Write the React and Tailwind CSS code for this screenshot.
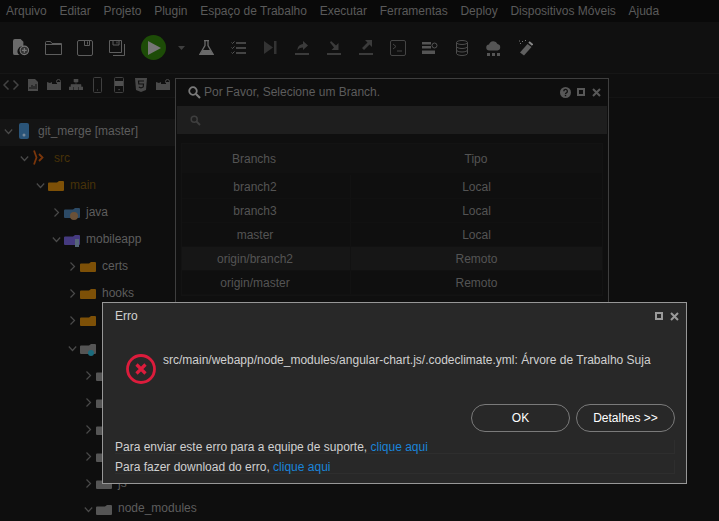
import React from "react";

const menus = ["Arquivo","Editar","Projeto","Plugin","Espaço de Trabalho","Executar","Ferramentas","Deploy","Dispositivos Móveis","Ajuda"];

const S = ({ w = 18, h = 18, vb = "0 0 18 18", children, className = "" }) => (
  <svg width={w} height={h} viewBox={vb} className={"shrink-0 " + className}>{children}</svg>
);

const C = "#5e5e5e";

const FolderIcon = ({ color = "#7d5007", children }) => (
  <svg width="16" height="11" viewBox="0 0 16 11" className="shrink-0 overflow-visible translate-y-[1px]">
    <path d="M0 3.500a1 1 0 0 1 1-1h8l2-1.500h4a1 1 0 0 1 1 1v8a1 1 0 0 1-1 1H1a1 1 0 0 1-1-1z" fill={color} />
    {children}
  </svg>
);

const Chev = ({ open }) => (
  <svg width="9" height="9" viewBox="0 0 9 9" className="shrink-0 translate-y-[1px]">
    {open ? <path d="M.8 2.500l3.700 4 3.700-4" fill="none" stroke="#4a4a4a" strokeWidth="1.200"/> : <path d="M2.500 .5l4 4-4 4" fill="none" stroke="#4a4a4a" strokeWidth="1.200"/>}
  </svg>
);

const Row = ({ ind, open, icon, label, color = "text-[#5d5d5d]", h = "h-[27px]", sel, gap = "gap-[3px]" }) => (
  <div className={`flex items-center pb-[4px] ${h} ${sel ? "bg-[#141414]" : ""}`}>
    <div className={`flex items-center ${gap} ${ind}`}>
      <Chev open={open} />
      {icon}
      <span className={`text-[12px] leading-none ml-[3px] whitespace-nowrap ${color}`}>{label}</span>
    </div>
  </div>
);

const Tool2 = ({ children }) => <div className="w-[21.7px] flex justify-center -mt-[2px]">{children}</div>;

const Ctl = ({ help, c = "#585858" }) => (
  <div className="flex items-center gap-[6px]">
    {help && (
      <svg width="11" height="11" viewBox="0 0 11 11"><circle cx="5.500" cy="5.500" r="5.500" fill={c}/><path d="M3.800 4.300a1.800 1.800 0 1 1 2.600 1.500c-.6.3-.9.6-.9 1.100" fill="none" stroke="#111" strokeWidth="1.300"/><rect x="4.800" y="7.800" width="1.400" height="1.400" fill="#111"/></svg>
    )}
    <svg width="8" height="8" viewBox="0 0 8 8"><rect x="1" y="1" width="6" height="6" fill="none" stroke={c} strokeWidth="2"/></svg>
    <svg width="9" height="9" viewBox="0 0 9 9" className="ml-[1px]"><path d="M1 1l7 7M8 1L1 8" stroke={c} strokeWidth="2"/></svg>
  </div>
);

const FolderBadge = () => (
  <svg width="14" height="11" viewBox="0 0 14 11"><path d="M0 3l3 1 2-1v2h5V3h4v8H0z" fill="#4a4a4a"/><circle cx="11.500" cy="2.500" r="2" fill="none" stroke="#4a4a4a"/></svg>
);

const tableRows = [["branch2","Local"],["branch3","Local"],["master","Local"],["origin/branch2","Remoto",true],["origin/master","Remoto"]];

export default function App() {
  return (
    <div className="relative w-[719px] h-[521px] overflow-hidden bg-[#0e0e0e] [font-family:'Liberation_Sans',Arial,sans-serif]">
      {/* menu */}
      <div className="h-[22px] bg-[#090909] flex items-center pl-[6px] gap-[12.7px] text-[12px] text-[#5a5a5a]">
        {menus.map((m) => <span key={m} className="whitespace-nowrap">{m}</span>)}
      </div>
      {/* toolbar */}
      <div className="h-[52px] bg-[#101010] border-b border-[#161616] flex items-center pl-[13px]">
        <div className="w-[32px]"><S w={17} h={17}><path d="M0 2a2 2 0 0 1 2-2h6l3 3v5a5 5 0 0 0-4 9H2a2 2 0 0 1-2-2z" fill="#6a6a6a"/><circle cx="12" cy="12" r="4.500" fill="#333" stroke="#777" strokeWidth="1.200"/><path d="M12 9.500v5M9.500 12h5" stroke="#777" strokeWidth="1.300"/></S></div>
        <div className="w-[32px]"><S w={17} h={14} vb="0 0 17 14"><path d="M.5 13.500V1.500a1 1 0 0 1 1-1h4l1.500 2h9.500v11z" fill="none" stroke={C}/><path d="M.5 3.500h16" stroke={C}/></S></div>
        <div className="w-[32px]"><S w={16} h={16} vb="0 0 16 16"><rect x=".5" y=".5" width="15" height="15" rx="1.500" fill="none" stroke={C}/><path d="M7.500 .5v5h5v-5M10.500 1.500v3" fill="none" stroke={C}/></S></div>
        <div className="w-[32px]"><S w={16} h={16} vb="0 0 16 16"><path d="M.5 .5h12v12H.5z" fill="none" stroke={C}/><path d="M4 .5v4.500h6V.5M8 1.500v2" fill="none" stroke={C}/><path d="M15.500 4v11.500H4" fill="none" stroke={C}/></S></div>
        <div className="w-[25px] h-[25px] rounded-full bg-[#1d4c07] flex items-center justify-center">
          <svg width="13" height="14" viewBox="0 0 13 14" className="ml-[1px]"><path d="M0 0l13 7-13 7z" fill="#767676"/></svg>
        </div>
        <svg width="7" height="4" viewBox="0 0 7 4" className="ml-[12px] mr-[14px]"><path d="M0 0h7L3.500 4z" fill="#3f3f3f"/></svg>
        <div className="w-[32px]"><S w={15} h={15} vb="0 0 15 15"><path d="M5 .5h5M6 .5v5L.8 14.500h13.400L9 5.500v-5" fill="none" stroke="#6a6a6a" strokeWidth="1.300"/><path d="M3.500 10h8l2 4H1.500z" fill="#6a6a6a"/></S></div>
        <div className="w-[33px]"><S w={15} h={14} vb="0 0 15 14"><path d="M5 2h10M5 7h10M5 12h10" stroke="#555" strokeWidth="1.400"/><path d="M.5 1.500l1 1 2-2M.5 6.500l1 1 2-2M.5 11.500l1 1 2-2" stroke="#555" fill="none"/></S></div>
        <div className="w-[31px]"><S w={13} h={13} vb="0 0 13 13"><path d="M0 0l9 6.500L0 13z" fill="#333"/><rect x="10" width="2.500" height="13" fill="#333"/></S></div>
        <div className="w-[32px]"><S w={14} h={15} vb="0 0 14 15"><path d="M8 1l5 4.500L8 10V7.500c-3 0-4.500 1-5.500 3 0-4 2-6 5.500-6.500z" fill="#3b3b3b"/><rect y="13" width="14" height="2" fill="#3b3b3b"/></S></div>
        <div className="w-[32px]"><S w={14} h={15} vb="0 0 14 15"><path d="M1 0l5 4.500L8.500 2v7H1.500L4 6.500 0 1.500z" fill="#3b3b3b" transform="translate(3 1)"/><rect y="13" width="14" height="2" fill="#3b3b3b"/></S></div>
        <div className="w-[31px]"><S w={14} h={15} vb="0 0 14 15"><path d="M13 0v7l-2.500-2.500L5 10 3 8l5.500-5.500L6 0z" fill="#3b3b3b"/><rect y="13" width="14" height="2" fill="#3b3b3b"/></S></div>
        <div className="w-[32px]"><S w={16} h={16} vb="0 0 16 16"><rect x=".5" y=".5" width="15" height="15" rx="1.500" fill="none" stroke="#444"/><path d="M3 4l3 2.500L3 9M7 11h5" fill="none" stroke="#444"/></S></div>
        <div className="w-[34px]"><S w={16} h={13} vb="0 0 16 13"><path d="M0 1h9v2.500H0zM0 5h9v2.500H0zM0 9.500h13V13H0z" fill="#555"/><circle cx="12.500" cy="4.500" r="2.500" fill="none" stroke="#555"/></S></div>
        <div className="w-[30px]"><S w={12} h={16} vb="0 0 12 16"><ellipse cx="6" cy="2.500" rx="5.500" ry="2" fill="none" stroke="#4d4d4d"/><path d="M.5 2.500v11c0 1 2.500 2 5.500 2s5.500-1 5.500-2v-11M.5 6.500c0 1 2.500 2 5.500 2s5.500-1 5.500-2M.5 10c0 1 2.500 2 5.500 2s5.500-1 5.500-2" fill="none" stroke="#4d4d4d"/></S></div>
        <div className="w-[32px]"><S w={15} h={16} vb="0 0 15 16"><path d="M3.500 10.500a3 3 0 0 1-.5-6 4.500 4.500 0 0 1 8.500-.5 3.300 3.300 0 0 1 0 6.500z" fill="#555"/><path d="M1 13h3v3H1zM6 13h3v3H6zM11 13h3v3h-3z" fill="#555"/></S></div>
        <div><S w={15} h={16} vb="0 0 15 16"><path d="M9.500 4l4 3-7.500 8.500-4-3z" fill="#606060"/><path d="M11 2l3.500 3" stroke="#888" strokeWidth="2"/><path d="M1 1h1M4 1.500h1M7 .5h1M2 3.500h1" stroke="#777"/></S></div>
      </div>
      {/* second toolbar */}
      <div className="h-[24px] bg-[#0f0f0f] border-b border-[#141414] flex items-center">
        <Tool2><svg width="16" height="10" viewBox="0 0 16 10"><path d="M5.500 .5L1 5l4.500 4.500M10.500 .5L15 5l-4.500 4.500" fill="none" stroke="#434343" strokeWidth="1.500"/></svg></Tool2>
        <Tool2><svg width="10" height="12" viewBox="0 0 10 12"><path d="M0 0h7l3 3v9H0z" fill="#4a4a4a"/><path d="M2 10V8M4 10V6M6 10V7M8 10V5" stroke="#111"/></svg></Tool2>
        <Tool2><FolderBadge /></Tool2>
        <Tool2><svg width="14" height="11" viewBox="0 0 14 11"><path d="M5 0h4v3H5zM0 8h4v3H0zM5 8h4v3H5zM10 8h4v3h-4zM2 8V5.500h10V8M7 3v5" fill="#4a4a4a" stroke="#4a4a4a" strokeWidth=".6"/></svg></Tool2>
        <Tool2><svg width="9" height="16" viewBox="0 0 9 16"><rect x=".5" y=".5" width="8" height="15" rx="1" fill="none" stroke="#404040"/><rect x="4" y="12.500" width="1" height="1" fill="#555"/></svg></Tool2>
        <Tool2><svg width="10" height="16" viewBox="0 0 10 16"><rect x=".5" y=".5" width="9" height="15" rx="1" fill="none" stroke="#404040"/><rect x="1" y="4" width="8" height="5" fill="#505050"/><rect x="4.500" y="12" width="1.200" height="1.200" fill="#555"/></svg></Tool2>
        <Tool2><svg width="12" height="14" viewBox="0 0 12 14"><path d="M0 0h12l-1 12-5 2-5-2z" fill="#484848"/><path d="M9 3H3.500l.3 3H8.500l-.3 3L6 10l-2.200-1" fill="none" stroke="#111" strokeWidth="1.100"/></svg></Tool2>
        <Tool2><FolderBadge /></Tool2>
      </div>
      {/* tree */}
      <div className="w-[240px] pt-[21px]">
        <Row sel ind="pl-[4px]" open gap="gap-[6px]" label="git_merge [master]" icon={<svg width="10" height="16" viewBox="0 0 10 16"><rect width="10" height="16" rx="2" fill="#2a5478"/><circle cx="5" cy="12" r="1.500" fill="#789"/></svg>} />
        <Row ind="pl-[20px]" open gap="gap-[4px]" color="text-[#473208]" label={<span className="ml-[2px]">src</span>} icon={<svg width="12" height="15" viewBox="0 0 12 15"><path d="M1 .5l2.500 7L1 14.500M6 4l3.500 3.500L6 11" fill="none" stroke="#7a360b" strokeWidth="1.800"/></svg>} />
        <Row ind="pl-[36px]" open color="text-[#473208]" label="main" icon={<FolderIcon />} />
        <Row ind="pl-[52px]" label="java" icon={<FolderIcon color="#2c4a66"><circle cx="10" cy="9" r="4" fill="#6b5138"/></FolderIcon>} />
        <Row ind="pl-[52px]" open label="mobileapp" icon={<FolderIcon color="#453a80"><rect x="11" y="5" width="4" height="8" fill="#567"/></FolderIcon>} />
        <Row ind="pl-[68px]" label="certs" icon={<FolderIcon />} />
        <Row ind="pl-[68px]" label="hooks" icon={<FolderIcon />} />
        <Row ind="pl-[68px]" label="" icon={<FolderIcon />} />
        <Row ind="pl-[68px]" open h="h-[28px]" label="" icon={<FolderIcon color="#555"><circle cx="11" cy="10" r="3" fill="#1b6b7d"/></FolderIcon>} />
        {[0,1,2,3].map((i) => <Row key={i} ind="pl-[84px]" label="" icon={<FolderIcon color="#555" />} />)}
        <Row ind="pl-[84px]" label="js" icon={<FolderIcon color="#555" />} />
        <Row ind="pl-[84px]" open h="h-[24px]" label="node_modules" icon={<FolderIcon color="#555" />} />
      </div>

      {/* branch dialog */}
      <div className="absolute left-[175px] top-[78px] w-[434px] h-[240px] bg-[#0f0f0f] border border-[#3e3e3e]">
        <div className="h-[27px] flex items-center pl-[12px] pr-[7px] pb-[1px] bg-[#0e0e0e]">
          <svg width="13" height="13" viewBox="0 0 13 13"><circle cx="5" cy="5" r="3.800" fill="none" stroke="#7a7a7a" strokeWidth="1.800"/><path d="M8 8l4 4" stroke="#7a7a7a" strokeWidth="2.200"/></svg>
          <span className="ml-[3px] text-[12px] text-[#5c5c5c] flex-1">Por Favor, Selecione um Branch.</span>
          <Ctl help />
        </div>
        <div className="h-[28px] mx-[1px] bg-[#1e1e1e] flex items-center pl-[13px]">
          <svg width="11" height="11" viewBox="0 0 11 11"><circle cx="4.200" cy="4.200" r="3" fill="none" stroke="#3e3e3e" strokeWidth="1.500"/><path d="M6.500 6.500l3.500 3.500" stroke="#3e3e3e" strokeWidth="1.800"/></svg>
        </div>
        <div className="mx-[5px] mt-[9px] text-[12px] text-[#545454] text-center border border-[#131313]">
          <div className="h-[29px] flex items-center bg-[#111111]">
            <span className="w-[168px] pr-[24px]">Branchs</span>
            <span className="flex-1">Tipo</span>
          </div>
          <div className="h-[2px]" />
          {tableRows.map(([a, b, hi]) => (
            <div key={a} className={`h-[24px] flex items-center border-b border-[#111111] ${hi ? "bg-[#161616]" : ""}`}>
              <span className="w-[168px] pr-[22px] h-full flex items-center justify-center">{a}</span>
              <span className="flex-1 border-l border-[#121212] h-full flex items-center justify-center">{b}</span>
            </div>
          ))}
        </div>
      </div>

      {/* error dialog */}
      <div className="absolute left-[102px] top-[302px] w-[585px] h-[182px] bg-[#282828] border border-[#979797] flex flex-col text-[12px] text-[#d0d0d0]">
        <div className="h-[24px] mt-[1px] flex items-center pl-[12px] pr-[7px] justify-between">
          <span>Erro</span>
          <Ctl c="#9a9a9a" />
        </div>
        <div className="flex pl-[23px] pt-[26px] h-[73px]">
          <svg width="30" height="30" viewBox="0 0 30 30" className="shrink-0">
            <circle cx="15" cy="15" r="13.500" fill="none" stroke="#dc1c3c" strokeWidth="2.800"/>
            <path d="M10.500 10.500l9 9M19.500 10.500l-9 9" stroke="#dc1c3c" strokeWidth="3.200"/>
          </svg>
          <span className="ml-[7px] -mt-[1px] h-[14px] leading-[14px] whitespace-nowrap">src/main/webapp/node_modules/angular-chart.js/.codeclimate.yml: Árvore de Trabalho Suja</span>
        </div>
        <div className="flex justify-end gap-[6px] pr-[11px] mt-[3px]">
          <button className="w-[99px] h-[28px] rounded-full border border-[#7a7a7a] text-[12px] text-white">OK</button>
          <button className="w-[99px] h-[28px] rounded-full border border-[#7a7a7a] text-[12px] text-white">Detalhes &gt;&gt;</button>
        </div>
        <div className="pl-[12px] pr-[11px] mt-[8px] flex flex-col gap-[6px] leading-[14px]">
          <div className="h-[14px] border-b border-r border-[#2e2e2e]">Para enviar este erro para a equipe de suporte, <span className="text-[#1a84d8]">clique aqui</span></div>
          <div className="h-[14px] border-b border-r border-[#2e2e2e]">Para fazer download do erro, <span className="text-[#1a84d8]">clique aqui</span></div>
        </div>
      </div>
    </div>
  );
}
